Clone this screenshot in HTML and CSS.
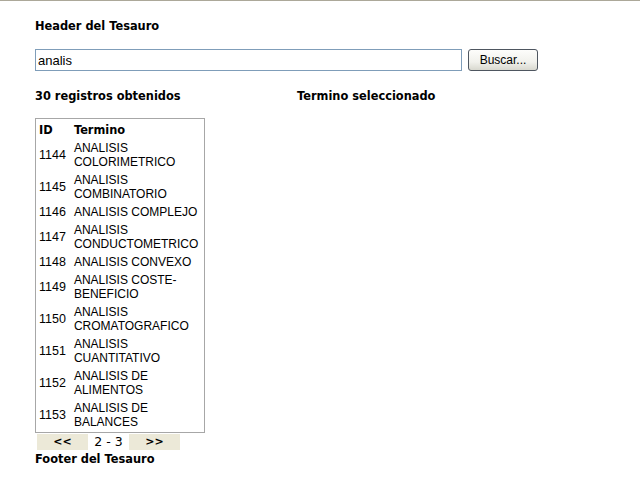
FILE: index.html
```html
<!DOCTYPE html>
<html lang="es">
<head>
<meta charset="utf-8">
<title>Tesauro</title>
<link rel="stylesheet" href="styles.css">
</head>
<body>
<div class="page">
  <div class="heading header-title">Header del Tesauro</div>
  <form class="search" onsubmit="return false">
    <input class="search-input" type="text" value="analis">
    <button class="search-btn" type="button">Buscar...</button>
  </form>
  <div class="main">
    <div class="results">
      <div class="heading">30 registros obtenidos</div>
      <div class="list-box">
        <table class="list">
          <thead>
            <tr><th class="id">ID</th><th>Termino</th></tr>
          </thead>
          <tbody>
            <tr><td class="id">1144</td><td>ANALISIS COLORIMETRICO</td></tr>
            <tr><td class="id">1145</td><td>ANALISIS COMBINATORIO</td></tr>
            <tr><td class="id">1146</td><td>ANALISIS COMPLEJO</td></tr>
            <tr><td class="id">1147</td><td>ANALISIS CONDUCTOMETRICO</td></tr>
            <tr><td class="id">1148</td><td>ANALISIS CONVEXO</td></tr>
            <tr><td class="id">1149</td><td>ANALISIS COSTE-BENEFICIO</td></tr>
            <tr><td class="id">1150</td><td>ANALISIS CROMATOGRAFICO</td></tr>
            <tr><td class="id">1151</td><td>ANALISIS CUANTITATIVO</td></tr>
            <tr><td class="id">1152</td><td>ANALISIS DE ALIMENTOS</td></tr>
            <tr><td class="id">1153</td><td>ANALISIS DE BALANCES</td></tr>
          </tbody>
        </table>
      </div>
      <table class="pager">
        <tr>
          <td class="pager-btn">&lt;&lt;</td>
          <td class="pager-pos">2 - 3</td>
          <td class="pager-btn">&gt;&gt;</td>
        </tr>
      </table>
    </div>
    <div class="detail">
      <div class="heading">Termino seleccionado</div>
    </div>
  </div>
  <div class="heading footer-title">Footer del Tesauro</div>
</div>
</body>
</html>
```

FILE: styles.css
```css
html, body {
  margin: 0;
  padding: 0;
  background: #ffffff;
}
body {
  border-top: 1px solid #aca899;
  font-family: "Liberation Sans", Arial, sans-serif;
  font-size: 12px;
  color: #000000;
}
.page {
  padding: 18px 0 0 35px;
}
.heading {
  font-family: "DejaVu Sans", Verdana, sans-serif;
  font-weight: bold;
  font-size: 11.4px;
  line-height: 14px;
}
.search {
  display: flex;
  align-items: center;
  gap: 6px;
  margin: 16px 0 18px 0;
}
.search-input {
  box-sizing: border-box;
  width: 427px;
  height: 22px;
  margin: 0;
  padding: 0 2px;
  border: 1px solid #7f9db9;
  font-family: "Liberation Sans", Arial, sans-serif;
  font-size: 13px;
  color: #000;
  background: #fff;
}
.search-btn {
  box-sizing: border-box;
  width: 70px;
  height: 22px;
  margin: 0;
  padding: 0;
  border: 1px solid #4e5660;
  border-radius: 3px;
  background: linear-gradient(#fdfdfb, #f1f1ec 60%, #d8d8cf);
  font-family: "Liberation Sans", Arial, sans-serif;
  font-size: 12px;
  color: #000;
}
.main {
  display: flex;
}
.results {
  width: 262px;
}
.list-box {
  box-sizing: border-box;
  width: 170px;
  margin-top: 15px;
  border: 1px solid #a7a7a7;
}
.list {
  width: 100%;
  border-collapse: separate;
  border-spacing: 2px;
}
.list th, .list td {
  padding: 1px;
  text-align: left;
  vertical-align: middle;
  line-height: 14px;
}
.list th {
  font-family: "DejaVu Sans", Verdana, sans-serif;
  font-size: 11.4px;
  font-weight: bold;
  padding-top: 2px;
}
.list .id {
  width: 1%;
  white-space: nowrap;
  padding-right: 5px;
}
.list td.id {
  font-size: 12.5px;
}
.pager {
  border-collapse: separate;
  border-spacing: 2px;
  margin-top: -1px;
}
.pager td {
  height: 16px;
  padding: 0;
  text-align: center;
  line-height: 14px;
}
.pager-btn {
  width: 51px;
  background: #ece9d8;
  font-family: "DejaVu Sans", Verdana, sans-serif;
  font-weight: bold;
  font-size: 11px;
}
.pager-pos {
  width: 37px;
  font-family: "DejaVu Sans", Verdana, sans-serif;
  font-size: 12.5px;
}
.footer-title {
  margin-top: 0;
}
```
